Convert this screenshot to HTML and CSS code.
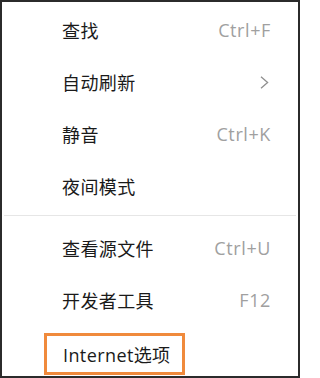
FILE: index.html
```html
<!DOCTYPE html>
<html lang="zh-CN">
<head>
<meta charset="utf-8">
<title>菜单</title>
<link rel="stylesheet" href="styles.css">
</head>
<body>
<div class="frame">
  <ul class="menu">
    <li class="item"><span class="label">查找</span><span class="key">Ctrl+F</span></li>
    <li class="item"><span class="label">自动刷新</span>
      <svg class="chev" width="9" height="13" viewBox="0 0 9 13"><path d="M1 0.8 L7.6 6.5 L1 12.2" fill="none" stroke="#8f8f8f" stroke-width="1.3"/></svg>
    </li>
    <li class="item"><span class="label">静音</span><span class="key">Ctrl+K</span></li>
    <li class="item"><span class="label">夜间模式</span></li>
    <li class="sep"></li>
    <li class="item"><span class="label">查看源文件</span><span class="key">Ctrl+U</span></li>
    <li class="item"><span class="label">开发者工具</span><span class="key">F12</span></li>
    <li class="item hl"><span class="label box">Internet选项</span></li>
  </ul>
</div>
</body>
</html>
```
FILE: styles.css
```css
html, body {
  margin: 0;
  padding: 0;
  background: #ffffff;
}
.frame {
  width: 300px;
  height: 378px;
  box-sizing: border-box;
  border: 2px solid #2b2b2b;
  overflow: hidden;
  background: #ffffff;
  font-family: "Open Sans", "Noto Sans CJK SC", sans-serif;
  font-size: 18px;
}
.menu {
  list-style: none;
  margin: 0;
  padding: 2px 0 0 0;
}
.item {
  display: flex;
  align-items: center;
  justify-content: space-between;
  height: 52px;
  padding: 0 28px 0 60px;
  box-sizing: border-box;
}
.label {
  color: #1a1a1a;
  white-space: nowrap;
  letter-spacing: 0.4px;
}
.key {
  color: #a0a0a0;
  white-space: nowrap;
  letter-spacing: 0.6px;
  margin-right: -1px;
}
.chev {
  margin-right: 1px;
  display: block;
}
.sep {
  height: 1px;
  background: #e6e6e6;
  margin: 3px 2px 6px 2px;
}
.item.hl {
  align-items: flex-start;
  padding-left: 42px;
  padding-top: 7px;
}
.box {
  display: flex;
  align-items: center;
  width: 141px;
  height: 42px;
  box-sizing: border-box;
  border: 3px solid #f08a3c;
  padding-left: 16px;
}
```
